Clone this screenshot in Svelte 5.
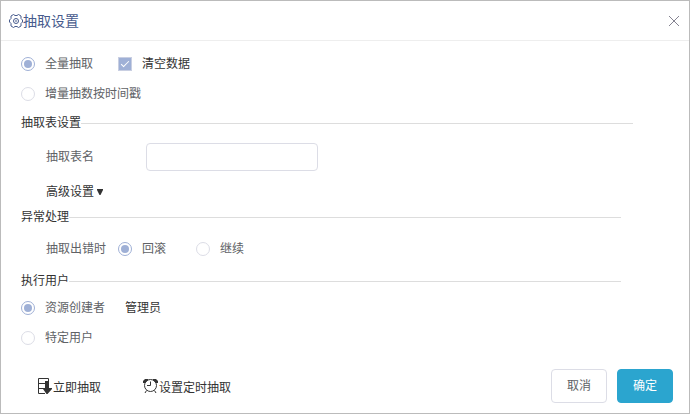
<script lang="ts">
  let mode = $state('full');
  let clearData = $state(true);
  let tableName = $state('');
  let onError = $state('rollback');
  let runAs = $state('owner');
</script>

<div class="dialog" role="dialog" aria-labelledby="dialog-title">
  <header>
    <svg class="gear" viewBox="0 0 14 14" aria-hidden="true">
      <path d="M4.5 .5 L6 1.5 H8 L9.5 .5 L12 2 V4.5 L13.5 6 V8 L12 9.5 V12 L9.5 13.5 L8 12.5 H6 L4.5 13.5 L2 12 V9.5 L.5 8 V6 L2 4.5 V2 Z" />
      <circle cx="7" cy="7" r="2.5" />
      <path d="M7 6v2" />
    </svg>
    <h2 id="dialog-title">抽取设置</h2>
    <button class="close" type="button" aria-label="关闭">
      <svg viewBox="0 0 12 12" aria-hidden="true"><path d="M1 1 L11 11 M11 1 L1 11" /></svg>
    </button>
  </header>

  <main>
    <div class="row">
      <label class="option first">
        <input type="radio" name="mode" value="full" bind:group={mode} />
        全量抽取
      </label>
      <label class="option dark">
        <input type="checkbox" bind:checked={clearData} />
        清空数据
      </label>
    </div>
    <div class="row">
      <label class="option">
        <input type="radio" name="mode" value="incremental" bind:group={mode} />
        增量抽数按时间戳
      </label>
    </div>

    <section class="table-settings">
      <h3>抽取表设置</h3>
      <div class="field">
        <label class="caption" for="table-name">抽取表名</label>
        <input id="table-name" type="text" bind:value={tableName} />
      </div>
      <button class="advanced" type="button">
        高级设置
        <svg viewBox="0 0 6 6" aria-hidden="true"><path d="M0 0 H6 V1 L3.5 6 H2.5 L0 1 Z" /></svg>
      </button>
    </section>

    <section class="errors">
      <h3>异常处理</h3>
      <div class="field" role="radiogroup" aria-labelledby="error-caption">
        <span class="caption" id="error-caption">抽取出错时</span>
        <label class="option">
          <input type="radio" name="error" value="rollback" bind:group={onError} />
          回滚
        </label>
        <label class="option">
          <input type="radio" name="error" value="continue" bind:group={onError} />
          继续
        </label>
      </div>
    </section>

    <section class="users">
      <h3>执行用户</h3>
      <div class="row">
        <label class="option">
          <input type="radio" name="user" value="owner" bind:group={runAs} />
          资源创建者
        </label>
        <span class="owner">管理员</span>
      </div>
      <div class="row">
        <label class="option">
          <input type="radio" name="user" value="specific" bind:group={runAs} />
          特定用户
        </label>
      </div>
    </section>
  </main>

  <footer>
    <button class="link" type="button">
      <svg viewBox="0 0 16 16" aria-hidden="true">
        <path class="line" d="M11.5 3 V.5 H1.5 V15.5 H8 M1.5 5.5 H8 M1.5 10.5 H6" />
        <path class="solid" d="M8 3 H12 V10 H15 V11 L10.5 16 H9.5 L6 11 V10 H8 Z" />
      </svg>
      立即抽取
    </button>
    <button class="link" type="button">
      <svg viewBox="0 0 16 16" aria-hidden="true">
        <circle class="line" cx="7.5" cy="7.5" r="6" />
        <path class="line" d="M7.5 3.5 V7.5 H4 M3.5 12.5 L2 15 M11.5 12.5 L13 15" />
        <path class="solid" d="M0 5 V3 L2 1 H5 V2 L2 5 Z M15 5 V3 L13 1 H10 V2 L13 5 Z" />
      </svg>
      设置定时抽取
    </button>
    <div class="actions">
      <button class="btn" type="button">取消</button>
      <button class="btn primary" type="button">确定</button>
    </div>
  </footer>
</div>

<style>
  :global(body) {
    background: #fff;
  }

  .dialog {
    box-sizing: border-box;
    border: 1px solid #bbb;
    background: #fff;
    color: #333;
    font: 12px/20px 'Liberation Sans', 'Noto Sans CJK SC', sans-serif;
  }

  header {
    display: flex;
    align-items: center;
    height: 39px;
    padding: 0 9px 0 8px;
    border-bottom: 1px solid #eee;
    color: #475b8d;
  }

  h2,
  h3 {
    margin: 0;
    font-weight: 400;
  }

  h2 {
    flex: 1;
    font-size: 14px;
  }

  svg {
    flex: none;
  }

  .gear {
    width: 14px;
    height: 14px;
    fill: none;
    stroke: currentColor;
  }

  button {
    padding: 0;
    border: 0;
    background: none;
    color: inherit;
    font: inherit;
    cursor: pointer;
  }

  .close {
    display: flex;
  }

  .close svg {
    width: 12px;
    height: 12px;
    fill: none;
    stroke: #858391;
  }

  main {
    padding: 8px 0 0 20px;
  }

  .row {
    display: flex;
    align-items: center;
    height: 30px;
  }

  .option {
    display: flex;
    align-items: center;
    gap: 10px;
    color: #606266;
  }

  .first {
    margin-right: 25px;
  }

  .dark {
    color: #333;
  }

  input {
    box-sizing: border-box;
    margin: 0;
    outline: none;
  }

  input[type='radio'],
  input[type='checkbox'] {
    appearance: none;
    display: grid;
    place-items: center;
    width: 14px;
    height: 14px;
    border: 1px solid #dcdde6;
  }

  input[type='radio'] {
    border-radius: 50%;
  }

  input[type='radio']:checked {
    border-color: #9fb0d6;
  }

  input[type='radio']:checked::after {
    content: '';
    width: 8px;
    height: 8px;
    border-radius: 50%;
    background: #9fb0d6;
  }

  input[type='checkbox']:checked {
    border-color: #c9cfe2;
    background: #9fb0d6;
  }

  input[type='checkbox']:checked::after {
    content: '';
    width: 8px;
    height: 4px;
    margin-bottom: 3px;
    box-sizing: border-box;
    border: solid #fff;
    border-width: 0 0 1px 1px;
    transform: rotate(-45deg);
  }

  h3 {
    display: flex;
    align-items: center;
    height: 20px;
    margin-right: 68px;
    font-size: 12px;
  }

  h3::after {
    content: '';
    flex: 1;
    height: 1px;
    background: #ddd;
  }

  .table-settings,
  .errors {
    padding-top: 4px;
  }

  .table-settings h3 {
    margin-right: 56px;
  }

  .users h3 {
    margin-bottom: 2px;
  }

  .field {
    display: flex;
    align-items: center;
    height: 48px;
    padding-left: 25px;
  }

  .caption {
    width: 100px;
    color: #606266;
  }

  #table-name {
    width: 172px;
    height: 28px;
    padding: 0 8px;
    border: 1px solid #dcdde6;
    border-radius: 4px;
    font: inherit;
  }

  .advanced {
    display: flex;
    align-items: center;
    gap: 3px;
    height: 22px;
    margin-left: 25px;
  }

  .advanced svg {
    width: 6px;
    height: 6px;
    fill: #333;
  }

  .errors .field {
    height: 44px;
  }

  .errors .caption {
    width: 72px;
  }

  .errors .option + .option {
    margin-left: 30px;
  }

  .owner {
    margin-left: 20px;
  }

  footer {
    display: flex;
    align-items: center;
    gap: 42px;
    padding: 16px 16px 10px 36px;
  }

  .link {
    display: flex;
    align-items: flex-end;
    padding-top: 4px;
  }

  .link svg {
    width: 16px;
    height: 16px;
    margin-bottom: 4px;
  }

  .line {
    fill: none;
    stroke: #333;
  }

  .solid {
    fill: #333;
  }

  .actions {
    display: flex;
    gap: 10px;
    margin-left: auto;
  }

  .btn {
    width: 56px;
    height: 34px;
    border: 1px solid #dcdde6;
    border-radius: 4px;
    color: #606266;
  }

  .primary {
    border-color: #2ba5cf;
    background: #2ba5cf;
    color: #fff;
  }
</style>
